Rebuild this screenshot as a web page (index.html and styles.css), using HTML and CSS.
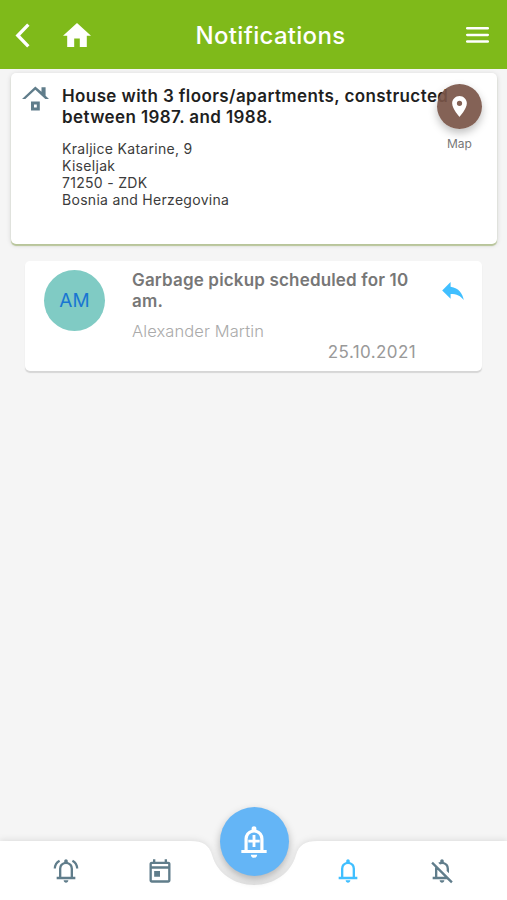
FILE: index.html
```
<!DOCTYPE html>
<html lang="en">
  <head>
    <meta charset="utf-8" />
    <meta name="viewport" content="width=device-width, initial-scale=1" />
    <title>Notifications</title>
    <link rel="stylesheet" href="styles.css">
  </head>
  <body>
    <header class="topbar">
      <svg class="back" viewBox="0 0 14 24"><path d="M12.6 1.6L2.5 12l10.1 10.4" /></svg>
      <svg class="home" viewBox="2 3 20 17"><path d="M10 20v-6h4v6h5v-8h3L12 3 2 12h3v8z" /></svg>
      <h1>Notifications</h1>
      <svg class="menu" viewBox="0 0 23 16"><path d="M1.2 1.3h20.6M1.2 7.9h20.6M1.2 14.5h20.6" /></svg>
    </header>

    <main>
      <section class="card building">
        <svg class="house" viewBox="0 0 27 25">
          <path d="M13.3.4L0 13h3.3l10-9.2 10 9.2H27l-3.4-3.3V1.2h-4.1v4.6z" />
          <path fill-rule="evenodd" d="M9 15.5h8.8v9H9zM12 18.5v3h2.8v-3z" />
        </svg>
        <div class="info">
          <h2>House with 3 floors/apartments, constructed between 1987. and 1988.</h2>
          <p>Kraljice Katarine, 9<br />Kiseljak<br />71250 - ZDK<br />Bosnia and Herzegovina</p>
        </div>
        <!-- map button floats over the title -->
        <div class="map">
          <div class="pin">
            <svg viewBox="5 2 14 20"><path d="M12 2C8.13 2 5 5.13 5 9c0 5.25 7 13 7 13s7-7.75 7-13c0-3.87-3.13-7-7-7zm0 9.5a2.5 2.5 0 1 1 0-5 2.5 2.5 0 0 1 0 5z" /></svg>
          </div>
          <span>Map</span>
        </div>
      </section>

      <section class="card message">
        <div class="avatar">AM</div>
        <div class="body">
          <h3>Garbage pickup scheduled for 10 am.</h3>
          <p class="author">Alexander Martin</p>
          <p class="date">25.10.2021</p>
        </div>
        <svg class="reply" viewBox="3 5 18 15"><path d="M10 9V5l-7 7 7 7v-4.1c5 0 8.5 1.6 11 5.1-1-5-4-10-11-11z" /></svg>
      </section>
    </main>

    <nav class="tabs">
      <svg class="tabs-bg" viewBox="0 0 507 61">
        <path d="M0 2H190C203 2 209 6 212 16C217 34 234 46 254 46C274 46 291 34 296 16C299 6 305 2 318 2H507V61H0z" />
      </svg>
      <a class="tab">
        <svg viewBox="0 0 24 24">
          <path d="M4 19v-2h2v-7q0-2.075 1.25-3.687Q8.5 4.7 10.5 4.2v-.7q0-.625.438-1.062Q11.375 2 12 2t1.063.438Q13.5 2.875 13.5 3.5v.7q2 .5 3.25 2.113Q18 7.925 18 10v7h2v2Zm8 3q-.825 0-1.412-.587Q10 20.825 10 20h4q0 .825-.587 1.413Q12.825 22 12 22Zm-4-5h8v-7q0-1.65-1.175-2.825Q13.65 6 12 6q-1.65 0-2.825 1.175Q8 8.35 8 10Z" />
          <path class="ring" d="M6.5 3.2Q2.6 5.4 2.4 9.8M17.5 3.2Q21.4 5.4 21.6 9.8" />
        </svg>
      </a>
      <a class="tab">
        <svg viewBox="0 0 24 24">
          <path d="M5 22q-.825 0-1.413-.587Q3 20.825 3 20V6q0-.825.587-1.412Q4.175 4 5 4h1V2h2v2h8V2h2v2h1q.825 0 1.413.588Q21 5.175 21 6v14q0 .825-.587 1.413Q19.825 22 19 22Zm0-2h14V10H5v10ZM5 8h14V6H5ZM7 12h5v5H7z" />
        </svg>
      </a>
      <a class="tab add">
        <svg viewBox="0 0 24 24">
          <path d="M4 19v-2h2v-7q0-2.075 1.25-3.687Q8.5 4.7 10.5 4.2v-.7q0-.625.438-1.062Q11.375 2 12 2t1.063.438Q13.5 2.875 13.5 3.5v.7q2 .5 3.25 2.113Q18 7.925 18 10v7h2v2Zm8 3q-.825 0-1.412-.587Q10 20.825 10 20h4q0 .825-.587 1.413Q12.825 22 12 22Zm-4-5h8v-7q0-1.65-1.175-2.825Q13.65 6 12 6q-1.65 0-2.825 1.175Q8 8.35 8 10Z" />
          <path d="M11.1 15.2v-2.9H8.4v-1.8h2.7V7.6h1.8v2.9h2.7v1.8h-2.7v2.9z" />
        </svg>
      </a>
      <a class="tab active">
        <svg viewBox="0 0 24 24">
          <path d="M4 19v-2h2v-7q0-2.075 1.25-3.687Q8.5 4.7 10.5 4.2v-.7q0-.625.438-1.062Q11.375 2 12 2t1.063.438Q13.5 2.875 13.5 3.5v.7q2 .5 3.25 2.113Q18 7.925 18 10v7h2v2Zm8 3q-.825 0-1.412-.587Q10 20.825 10 20h4q0 .825-.587 1.413Q12.825 22 12 22Zm-4-5h8v-7q0-1.65-1.175-2.825Q13.65 6 12 6q-1.65 0-2.825 1.175Q8 8.35 8 10Z" />
        </svg>
      </a>
      <a class="tab">
        <svg viewBox="0 0 24 24">
          <path d="M4 19v-2h2v-7q0-1.5.7-2.8l1.5 1.5Q8 9.3 8 10v7h6.2L2.8 5.5l1.4-1.4 17 17-1.4 1.4L16.2 19Zm8 3q-.825 0-1.412-.587Q10 20.825 10 20h4q0 .825-.587 1.413Q12.825 22 12 22ZM18 14l-2-2v-2q0-1.65-1.175-2.825Q13.65 6 12 6q-.9 0-1.7.4L8.8 4.9q.8-.5 1.7-.7v-.7q0-.625.438-1.062Q11.375 2 12 2t1.063.438Q13.5 2.875 13.5 3.5v.7q2 .5 3.25 2.113Q18 7.925 18 10z" />
        </svg>
      </a>
    </nav>
  </body>
</html>
```
FILE: styles.css
```
* {
  box-sizing: border-box;
}

body {
  margin: 0;
  height: 900px;
  display: flex;
  flex-direction: column;
  overflow: hidden;
  background-color: #f5f5f5;
  font-family: Inter, Roboto, sans-serif;
}

h1,
h2,
h3,
p {
  margin: 0;
}

svg {
  display: block;
  fill: currentColor;
}

/* top bar */
.topbar {
  height: 69px;
  padding: 1px 18px 0 15px;
  display: flex;
  align-items: center;
  color: white;
  background-color: #7fba1a;
}

.topbar h1 {
  flex: 1;
  padding: 1px 16px 0 0;
  text-align: center;
  font-size: 24px;
  font-weight: 500;
  line-height: 30px;
  letter-spacing: 0.3px;
}

.back {
  width: 15px;
  height: 25px;
  margin-right: 33px;
  fill: none;
  stroke: white;
  stroke-width: 3.2;
}

.home {
  width: 28px;
  height: 24px;
}

.menu {
  width: 23px;
  height: 16px;
  fill: none;
  stroke: white;
  stroke-width: 2.5;
  stroke-linecap: round;
}

/* cards */
main {
  flex: 1;
  padding: 4px 10px 0 11px;
}

.card {
  display: flex;
  align-items: flex-start;
  background-color: white;
  border-radius: 5px;
}

.building {
  position: relative;
  height: 171px;
  padding: 13px 0 0 11px;
  gap: 13px;
  box-shadow: 0 2px 1px #b8c59a, 0 1px 5px rgba(0, 0, 0, 0.15);
}

.house {
  width: 27px;
  height: 25px;
  color: #607d8b;
}

.info h2 {
  width: 400px;
  font-size: 17px;
  font-weight: 600;
  line-height: 21px;
  letter-spacing: 0.4px;
  color: #1f1f1f;
}

.info p {
  margin-top: 12px;
  font-size: 14px;
  line-height: 17px;
  letter-spacing: 0.3px;
  color: #3c3c3c;
}

.map {
  position: absolute;
  top: 11px;
  right: 15px;
  width: 45px;
  display: flex;
  flex-direction: column;
  align-items: center;
  font-size: 12px;
  color: #777;
}

.pin {
  width: 45px;
  height: 45px;
  margin-bottom: 7px;
  display: flex;
  align-items: center;
  justify-content: center;
  border-radius: 50%;
  color: white;
  background-color: rgba(121, 85, 72, 0.92);
  box-shadow: 0 4px 8px rgba(0, 0, 0, 0.25);
}

.pin svg {
  width: 15px;
  height: 21px;
}

.message {
  height: 110px;
  margin: 17px 15px 0 14px;
  padding: 9px 18px 0 19px;
  box-shadow: 0 2px 1px #d6d6d6;
}

.avatar {
  flex: none;
  width: 61px;
  height: 61px;
  border-radius: 50%;
  text-align: center;
  line-height: 61px;
  font-size: 19px;
  color: #1976d2;
  background-color: #80cbc4;
}

.body {
  width: 284px;
  margin-left: 27px;
}

.body h3 {
  font-size: 17px;
  font-weight: 600;
  line-height: 21px;
  letter-spacing: 0.17px;
  color: #777;
}

.author {
  margin-top: 9px;
  font-size: 16.5px;
  font-weight: 300;
  line-height: 21px;
  letter-spacing: 0.1px;
  color: #aaa;
}

.date {
  text-align: right;
  font-size: 17px;
  line-height: 21px;
  letter-spacing: 0.4px;
  color: #999;
}

.reply {
  width: 22px;
  height: 18px;
  margin: 12px 0 0 auto;
  color: #40bfff;
}

/* bottom tabs */
.tabs {
  position: relative;
  height: 61px;
  padding: 2px 18px 0 19px;
  display: grid;
  grid-template-columns: repeat(5, 1fr);
  color: #607d8b;
}

.tabs-bg {
  position: absolute;
  inset: 0;
  width: 100%;
  height: 61px;
  overflow: visible;
  fill: white;
  filter: drop-shadow(0 -1px 3px rgba(0, 0, 0, 0.1));
}

.tab {
  position: relative;
  display: flex;
  align-items: center;
  justify-content: center;
}

.tab svg {
  width: 28px;
  height: 28px;
}

.ring {
  fill: none;
  stroke: currentColor;
  stroke-width: 1.9;
}

.active {
  color: #40bfff;
}

.add {
  width: 69px;
  height: 69px;
  margin-top: -34px;
  justify-self: center;
  border-radius: 50%;
  color: white;
  background-color: #64b5f6;
  box-shadow: 0 4px 9px rgba(0, 0, 0, 0.27);
}

.add svg {
  width: 38px;
  height: 38px;
}
```
